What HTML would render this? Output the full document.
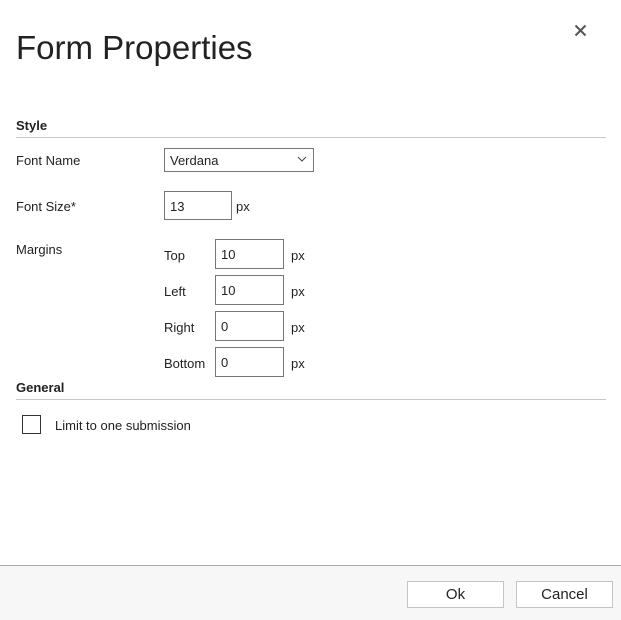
<!DOCTYPE html><html><head><style>
body{margin:0;width:621px;height:619px;background:#fff;font-family:"Liberation Sans",sans-serif;color:#222;position:relative;overflow:hidden}
.a{position:absolute}
.t{font-size:13px}
.in{position:absolute;border:1px solid #767676;box-sizing:border-box;font-size:13px;padding-left:5px;line-height:30px;background:#fff}
.hr{position:absolute;left:16px;width:590px;height:1px;background:#c8c8c8}
.btn{position:absolute;top:581px;height:27px;width:97px;border:1px solid #c4c4c4;box-sizing:border-box;background:#fff;text-align:center;line-height:25px;font-size:15px}
</style></head><body>
<div class="a" style="left:16px;top:29px;font-size:33px;color:#222">Form Properties</div>
<svg class="a" style="left:574px;top:24px" width="13" height="13"><path d="M1.5 1.5L11.5 11.5M11.5 1.5L1.5 11.5" stroke="#555" stroke-width="2"/></svg>
<div class="a" style="left:16px;top:118px;font-size:13px;font-weight:bold">Style</div>
<div class="hr" style="top:137px"></div>
<div class="a t" style="left:16px;top:153px">Font Name</div>
<div class="in" style="left:164px;top:148px;width:150px;height:24px;line-height:23px">Verdana</div>
<svg class="a" style="left:297px;top:156px" width="10" height="7"><path d="M1 1L5 5L9 1" stroke="#444" fill="none"/></svg>
<div class="a t" style="left:16px;top:199px">Font Size*</div>
<div class="in" style="left:164px;top:191px;width:68px;height:29px">13</div>
<div class="a t" style="left:236px;top:199px">px</div>
<div class="a t" style="left:16px;top:242px">Margins</div>
<div class="a t" style="left:164px;top:248px">Top</div>
<div class="in" style="left:215px;top:239px;width:69px;height:30px">10</div>
<div class="a t" style="left:291px;top:248px">px</div>
<div class="a t" style="left:164px;top:284px">Left</div>
<div class="in" style="left:215px;top:275px;width:69px;height:30px">10</div>
<div class="a t" style="left:291px;top:284px">px</div>
<div class="a t" style="left:164px;top:320px">Right</div>
<div class="in" style="left:215px;top:311px;width:69px;height:30px">0</div>
<div class="a t" style="left:291px;top:320px">px</div>
<div class="a t" style="left:164px;top:356px">Bottom</div>
<div class="in" style="left:215px;top:347px;width:69px;height:30px">0</div>
<div class="a t" style="left:291px;top:356px">px</div>
<div class="a" style="left:16px;top:380px;font-size:13px;font-weight:bold">General</div>
<div class="hr" style="top:399px"></div>
<div class="a" style="left:22px;top:415px;width:19px;height:19px;border:1px solid #333;box-sizing:border-box"></div>
<div class="a t" style="left:55px;top:418px">Limit to one submission</div>
<div class="a" style="left:0;top:565px;width:621px;height:54px;background:#f7f7f7;border-top:1px solid #aaa"></div>
<div class="btn" style="left:407px">Ok</div>
<div class="btn" style="left:516px">Cancel</div>
</body></html>
